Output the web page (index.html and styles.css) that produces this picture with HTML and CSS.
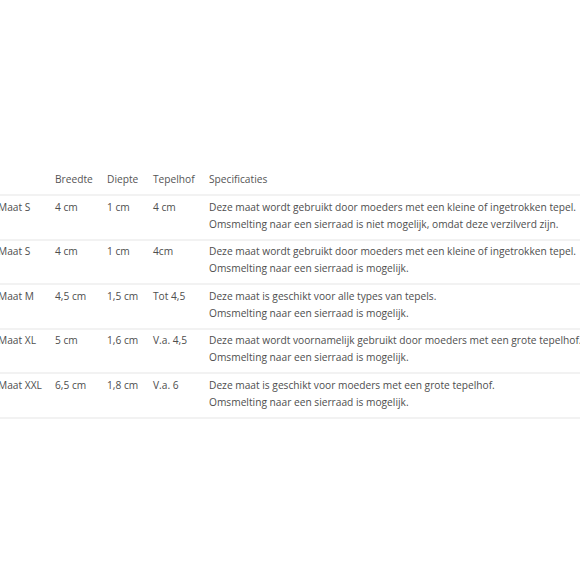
FILE: index.html
```
<!DOCTYPE html>
<html lang="nl">
<head>
<meta charset="utf-8">
<title>Maten</title>
<link rel="stylesheet" href="styles.css">
</head>
<body>
<div class="page">
  <table class="sizes">
    <thead>
      <tr>
        <th class="c-name"></th>
        <th class="c-w">Breedte</th>
        <th class="c-d">Diepte</th>
        <th class="c-t">Tepelhof</th>
        <th class="c-s">Specificaties</th>
      </tr>
    </thead>
    <tbody>
      <tr>
        <td>Maat S</td><td>4 cm</td><td>1 cm</td><td>4 cm</td>
        <td>Deze maat wordt gebruikt door moeders met een kleine of ingetrokken tepel.<br>Omsmelting naar een sierraad is niet mogelijk, omdat deze verzilverd zijn.</td>
      </tr>
      <tr>
        <td>Maat S</td><td>4 cm</td><td>1 cm</td><td>4cm</td>
        <td>Deze maat wordt gebruikt door moeders met een kleine of ingetrokken tepel.<br>Omsmelting naar een sierraad is mogelijk.</td>
      </tr>
      <tr>
        <td>Maat M</td><td>4,5 cm</td><td>1,5 cm</td><td>Tot 4,5</td>
        <td>Deze maat is geschikt voor alle types van tepels.<br>Omsmelting naar een sierraad is mogelijk.</td>
      </tr>
      <tr>
        <td>Maat XL</td><td>5 cm</td><td>1,6 cm</td><td>V.a. 4,5</td>
        <td>Deze maat wordt voornamelijk gebruikt door moeders met een grote tepelhof.<br>Omsmelting naar een sierraad is mogelijk.</td>
      </tr>
      <tr>
        <td>Maat XXL</td><td>6,5 cm</td><td>1,8 cm</td><td>V.a. 6</td>
        <td>Deze maat is geschikt voor moeders met een grote tepelhof.<br>Omsmelting naar een sierraad is mogelijk.</td>
      </tr>
    </tbody>
  </table>
</div>
</body>
</html>
```
FILE: styles.css
```
html, body {
  margin: 0;
  padding: 0;
  background: #ffffff;
  overflow: hidden;
}
.page {
  width: 580px;
  height: 580px;
  overflow: hidden;
  padding-top: 168px;
  box-sizing: border-box;
}
.sizes {
  margin-left: -2px;
  border-collapse: collapse;
  table-layout: fixed;
  width: 660px;
  font-family: "Open Sans", "Liberation Sans", sans-serif;
  font-size: 10.2px;
  line-height: 17px;
  color: #4e4e4e;
}
.sizes th {
  font-weight: normal;
  text-align: left;
  color: #555555;
}
.sizes th, .sizes td {
  padding: 3px 0 5.6px 0;
  vertical-align: top;
  white-space: nowrap;
  border-bottom: 2px solid #f2f2f2;
}
.sizes th {
  padding-bottom: 6px;
}
.sizes td {
  padding-top: 2.6px;
  padding-bottom: 6px;
}
.c-name { width: 57px; }
.c-w { width: 52px; }
.c-d { width: 46px; }
.c-t { width: 56px; }
.c-s { width: auto; }
```
